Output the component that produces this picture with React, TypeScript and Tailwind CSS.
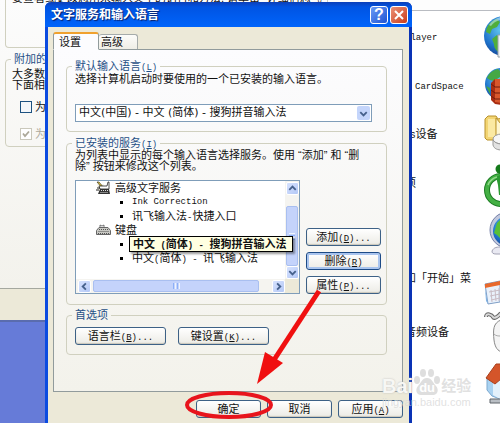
import React from "react";

const FONT = "font-['Liberation_Sans','Noto_Sans_CJK_SC',sans-serif]";

interface MonoProps {
	children: React.ReactNode;
}

// Half-width latin text next to the chinese glyphs
const Mono: React.FC<MonoProps> = ({ children }) => (
	<span className="font-['Liberation_Mono',monospace] text-[9px] leading-none whitespace-pre">
		{children}
	</span>
);

interface AccelProps {
	text: string;
	accel: string;
	dots?: boolean;
}

const Accel: React.FC<AccelProps> = ({ text, accel, dots }) => (
	<>
		{text}
		<Mono>
			(<u>{accel}</u>){dots ? "..." : ""}
		</Mono>
	</>
);

interface XpButtonProps {
	children: React.ReactNode;
	className?: string;
	focused?: boolean;
}

const XpButton: React.FC<XpButtonProps> = ({
	children,
	className = "",
	focused,
}) => (
	<button
		type="button"
		className={`flex h-[18px] items-center justify-center rounded-[3px] border bg-linear-to-b from-white to-[#ecebe5] whitespace-nowrap ${
			focused
				? "border-[#1c4a86] shadow-[inset_0_0_0_2px_#a9c4ee]"
				: "border-[#3d6186] shadow-[inset_0_-1px_1px_#c9c6ba]"
		} ${className}`}
	>
		<span className="leading-4">{children}</span>
	</button>
);

interface GroupProps {
	title: React.ReactNode;
	className?: string;
	children: React.ReactNode;
}

const Group: React.FC<GroupProps> = ({ title, className = "", children }) => (
	<fieldset
		className={`min-w-0 rounded-[4px] border border-[#d0d0bf] px-2 ${className}`}
	>
		<legend className="-ml-[3px] h-3 px-[3px] leading-3 text-[#1f4f86]">
			{title}
		</legend>
		{children}
	</fieldset>
);

const arrows = {
	up: "M2.5 7.5 6 4l3.5 3.5",
	down: "M2.5 4.5 6 8l3.5-3.5",
	left: "M7.5 2.5 4 6l3.5 3.5",
	right: "M4.5 2.5 8 6 4.5 9.5",
};

const ScrollButton: React.FC<{ dir: keyof typeof arrows }> = ({ dir }) => (
	<button
		type="button"
		aria-label={dir}
		className="flex size-[13px] shrink-0 items-center justify-center rounded-[2px] border border-white bg-linear-to-br from-[#d6e2fe] to-[#b4c8f6]"
	>
		<svg viewBox="0 0 12 12" className="size-[11px]">
			<path d={arrows[dir]} fill="none" stroke="#46618c" strokeWidth="2" />
		</svg>
	</button>
);

const HandwritingIcon = () => (
	<svg viewBox="0 0 15 14" className="h-[14px] w-[15px] shrink-0">
		<path d="M1 3h7v8H3z" fill="#f7f5e8" />
		<path d="M1 1l2 0 5 6-1 1z" fill="#e8c93a" stroke="#222" strokeWidth=".6" />
		<path d="M3 5h8l1-4h1v7H4z" fill="#fff" stroke="#222" strokeWidth=".8" />
		<path d="M4 8h9l1 5H2z" fill="#333" />
		<path d="M5 9.5h7M4.5 11.5h8" stroke="#ddd" strokeDasharray="1 1" />
		<path d="M1 7h3M0 9h3" stroke="#222" />
	</svg>
);

const KeyboardIcon = () => (
	<svg viewBox="0 0 15 14" className="h-[14px] w-[15px] shrink-0">
		<path d="M4 4V2l2 1 2-1v2" fill="none" stroke="#555" strokeWidth=".8" />
		<path d="M3 4.5h9l2.5 3v4h-14v-4z" fill="#c9c9c4" stroke="#666" />
		<path
			d="M3 6.5h9M2.5 8.5h10.5M2 10.5h11"
			stroke="#555"
			strokeDasharray="1 1"
		/>
	</svg>
);

const Bullet = () => (
	<i className="mr-[9px] ml-[44px] size-[3px] shrink-0 bg-black" />
);

const ServiceList = () => (
	<div className="flex h-[114px] flex-1 flex-col border border-[#7f9db9] bg-white">
		<div className="flex min-h-0 flex-1">
			<ul className="flex-1 whitespace-nowrap [&>li]:flex [&>li]:h-[14px] [&>li]:items-center">
				<li className="gap-1 pl-5">
					<HandwritingIcon />
					高级文字服务
				</li>
				<li>
					<Bullet />
					<Mono>Ink Correction</Mono>
				</li>
				<li>
					<Bullet />
					<span>
						讯飞输入法<Mono>-</Mono>快捷入口
					</span>
				</li>
				<li className="gap-1 pl-5">
					<KeyboardIcon />
					键盘
				</li>
				<li className="relative">
					<Bullet />
					<span
						role="tooltip"
						className="absolute left-[53px] z-10 h-[16px] border border-black bg-[#ffffe1] pr-[6px] pl-[3px] leading-[14px] font-bold shadow-[2px_2px_2px_#00000066]"
					>
						中文<Mono> (</Mono>简体<Mono>) - </Mono>搜狗拼音输入法
					</span>
				</li>
				<li>
					<Bullet />
					<span>
						中文<Mono>(</Mono>简体<Mono>) - </Mono>讯飞输入法
					</span>
				</li>
			</ul>
			<div className="flex w-[14px] flex-col items-center bg-[#f5f4f0] pt-px">
				<ScrollButton dir="up" />
				<div className="mt-[11px] flex w-[12px] flex-1 flex-col items-center justify-center gap-px rounded-[2px] border border-[#a9bff0] bg-[#c4d3fb]">
					<i className="h-px w-[6px] bg-[#eef4fe]" />
					<i className="h-px w-[6px] bg-[#8cb0f8]" />
					<i className="h-px w-[6px] bg-[#eef4fe]" />
					<i className="h-px w-[6px] bg-[#8cb0f8]" />
				</div>
				<ScrollButton dir="down" />
			</div>
		</div>
		<div className="flex h-[14px] items-center bg-[#ece9d8]">
			<div className="flex h-full flex-1 items-center bg-[#f5f4f0] pl-[2px]">
				<ScrollButton dir="left" />
				<div className="mr-[13px] ml-[2px] flex h-[12px] flex-1 items-center justify-center gap-px rounded-[2px] border border-[#a9bff0] bg-[#c4d3fb]">
					<i className="h-[6px] w-px bg-[#8cb0f8]" />
					<i className="h-[6px] w-px bg-[#eef4fe]" />
					<i className="h-[6px] w-px bg-[#8cb0f8]" />
					<i className="h-[6px] w-px bg-[#eef4fe]" />
				</div>
				<ScrollButton dir="right" />
			</div>
			<div className="w-[14px]" />
		</div>
	</div>
);

const Dialog = () => (
	<section
		role="dialog"
		aria-label="文字服务和输入语言"
		className="absolute top-[2px] left-[45px] w-[367px] rounded-t-[6px] border-x-[3px] border-[#0b4be0] border-r-[#0a33b5] bg-[#ece9d8] pb-6"
	>
		<header className="-mx-[3px] flex h-[25px] items-center rounded-t-[6px] bg-linear-to-b from-[#0a3fb8] via-[#0054e3] via-20% to-[#0064fb] pr-1 pl-[6px]">
			<h1 className="flex-1 text-[12px] font-bold text-white [text-shadow:1px_1px_1px_#0a1f66]">
				文字服务和输入语言
			</h1>
			<button
				type="button"
				aria-label="帮助"
				className="mr-[2px] flex size-[18px] items-center justify-center rounded-[3px] border border-white bg-linear-to-br from-[#6b9bf6] to-[#1f52d2] text-[16px] leading-none font-bold text-white"
			>
				?
			</button>
			<button
				type="button"
				aria-label="关闭"
				className="flex size-[18px] items-center justify-center rounded-[3px] border border-white bg-linear-to-br from-[#ec9076] to-[#c83a14]"
			>
				<svg viewBox="0 0 16 16" className="size-4">
					<path d="M4 4l8 8M12 4l-8 8" stroke="#fff" strokeWidth="2" />
				</svg>
			</button>
		</header>

		<div className="pt-[5px] pr-[6px] pl-[5px]">
			<div role="tablist" className="flex items-end">
				<button
					type="button"
					role="tab"
					aria-selected="true"
					className="relative -mb-px h-[18px] w-[46px] rounded-t-[3px] border border-t-2 border-[#919b9c] border-t-[#f0a12e] border-b-[#fcfcfe] bg-[#fcfcfe] pr-3 leading-3"
				>
					设置
				</button>
				<button
					type="button"
					role="tab"
					aria-selected="false"
					className="h-[15px] w-[39px] rounded-t-[3px] border border-b-0 border-l-0 border-[#a5abaa] bg-linear-to-b from-[#fcfcfa] to-[#efeee6] pr-3 leading-3"
				>
					高级
				</button>
			</div>

			<div className="border border-[#919b9c] bg-linear-to-b from-[#fcfcfe] to-[#f3f2eb] pt-[10px] pr-[15px] pb-9 pl-3">
				<Group title={<Accel text="默认输入语言" accel="L" />} className="pb-[9px]">
					<p className="leading-[14px] whitespace-nowrap">
						选择计算机启动时要使用的一个已安装的输入语言。
					</p>
					<div className="relative mt-[18px] mr-[6px]">
						<select
							aria-label="默认输入语言"
							className="block h-[18px] w-full appearance-none border border-[#7f9db9] bg-white pl-[3px] font-['DejaVu_Sans','Noto_Sans_CJK_SC',sans-serif] leading-4"
						>
							<option>中文(中国) - 中文 (简体) - 搜狗拼音输入法</option>
						</select>
						<span className="pointer-events-none absolute top-[2px] right-[2px] flex h-[14px] w-[13px] items-center justify-center rounded-[2px] bg-[#c4d5fb]">
							<svg viewBox="0 0 12 12" className="size-[11px]">
								<path
									d={arrows.down}
									fill="none"
									stroke="#46618c"
									strokeWidth="2"
								/>
							</svg>
						</span>
					</div>
				</Group>

				<Group
					title={<Accel text="已安装的服务" accel="I" />}
					className="mt-[5px] pb-[10px]"
				>
					<p className="pt-px leading-[11px] whitespace-nowrap">
						为列表中显示的每个输入语言选择服务。使用 “添加” 和 “删
						<br />
						除” 按钮来修改这个列表。
					</p>
					<div className="mt-2 -mr-[3px] flex items-end gap-[6px]">
						<ServiceList />
						<div className="flex w-[75px] flex-col gap-[6px]">
							<XpButton>
								<Accel text="添加" accel="D" dots />
							</XpButton>
							<XpButton focused>
								<Accel text="删除" accel="R" />
							</XpButton>
							<XpButton>
								<Accel text="属性" accel="P" dots />
							</XpButton>
						</div>
					</div>
				</Group>

				<Group title="首选项" className="mt-1 pt-[6px] pb-[9px]">
					<div className="flex gap-3">
						<XpButton className="w-[91px]">
							<Accel text="语言栏" accel="B" dots />
						</XpButton>
						<XpButton className="w-[91px]">
							<Accel text="键设置" accel="K" dots />
						</XpButton>
					</div>
				</Group>
			</div>

			<div className="mt-2 flex justify-end gap-[6px]">
				<XpButton className="w-[65px]">确定</XpButton>
				<XpButton className="w-[65px]">取消</XpButton>
				<XpButton className="w-[65px]">
					<Accel text="应用" accel="A" />
				</XpButton>
			</div>
		</div>
	</section>
);

// Regional options window, mostly hidden by the dialog
const RegionalWindow = () => (
	<div className="w-[405px] shrink-0">
		<div className="flex h-[289px] flex-col border-b border-[#a5a89f] bg-linear-to-b from-[#fcfcfc] to-[#f3f2ec] pl-[5px]">
			<div className="h-[48px] w-[323px] shrink-0 rounded-b-[4px] border border-t-0 border-[#d0d0bf]">
				<p className="-mt-[8px] pl-[6px] leading-3 whitespace-nowrap">
					要查看或更改您用来输入文字的语言和方法, 请单击 “详细信息” 。
				</p>
			</div>
			<Group title="附加的" className="mt-[5px] w-[323px] pb-[5px]">
				<p className="-ml-[2px] pt-[4px] leading-[11px]">
					大多数
					<br />
					下面相
				</p>
				<label className="mt-[9px] flex h-[14px] items-center gap-[3px] pl-[6px]">
					<input
						type="checkbox"
						className="size-[12px] appearance-none border border-[#1d5281] bg-[#f4f7fa]"
					/>
					为复
				</label>
				<label className="mt-[13px] flex h-[14px] items-center gap-[3px] pl-[6px] text-[#aca899]">
					<span className="grid size-[12px] *:col-start-1 *:row-start-1">
						<input
							type="checkbox"
							disabled
							defaultChecked
							className="size-[12px] appearance-none border border-[#cac8bb] bg-white"
						/>
						<svg viewBox="0 0 12 12" className="size-[12px]">
							<path
								d="M3 5.5 5 8l4-4.5"
								fill="none"
								stroke="#aca899"
								strokeWidth="1.8"
							/>
						</svg>
					</span>
					为东
				</label>
			</Group>
		</div>
		<div className="h-[33px] border-b-2 border-[#5a6cae] bg-[#ece9d8]" />
	</div>
);

const rows = [
	{
		label: <Mono>Player</Mono>,
		pad: "",
		icon: (
			<>
				<circle cx="20" cy="24" r="20" fill="url(#globe)" />
				<path
					d="M2 20c1-7 5-11 11-13l3 3-3 5-5 2-2 5zM8 27l5-4 3 3v15c-5-3-6-6-6-9z"
					fill="#4fae3c"
				/>
				<path d="M5 13c3-4 6-6 11-8v3c-4 1-7 3-9 6z" fill="#bfe6f2" opacity=".6" />
				<path d="M14 23h4v22h-4z" fill="#eef0f2" stroke="#9aa3aa" />
			</>
		),
	},
	{
		label: <Mono>CardSpace</Mono>,
		pad: "pl-[10px]",
		icon: (
			<>
				<circle cx="17" cy="23" r="16" fill="url(#globe)" />
				<path d="M3 17c2-5 6-8 11-9l2 2v6l-6 4-4-1zM2 25l4 2v6z" fill="#45a845" />
				<path d="M7 22l4-4h7v26l-7-1-4-4z" fill="#a92d12" />
				<path d="M11 18h6v24l-6-1z" fill="#d8572c" />
				<path d="M7 29l4 3h6M7 35l4 3h6M7 23l4 3h6" stroke="#6f1b0b" fill="none" />
			</>
		),
	},
	{
		label: (
			<>
				<Mono>S</Mono>设备
			</>
		),
		pad: "pl-[5px]",
		icon: (
			<>
				<path
					d="M1 9l3-3h8l2 3 4-1v22H3l-2-2z"
					fill="#f3d573"
					stroke="#b8912c"
				/>
				<path d="M4 9h7l1 18H4z" fill="#fbe9a2" />
				<path d="M12 8l5 6v10l-5 4z" fill="#fff6cf" stroke="#b8912c" />
				<ellipse cx="18" cy="29" rx="9" ry="5" fill="#f6f6f6" stroke="#999" />
				<path d="M9 30v5c1 4 5 5 9 5v-6c-4 0-7-1-9-4z" fill="#e2e2e2" stroke="#999" />
			</>
		),
	},
	{
		label: "项",
		pad: "",
		icon: (
			<>
				<circle cx="17" cy="31" r="14" fill="none" stroke="#1d7d24" strokeWidth="6" />
				<circle cx="17" cy="31" r="14" fill="none" stroke="#44b044" strokeWidth="4" />
				<circle cx="16" cy="10" r="4.5" fill="#157a1b" />
				<path d="M12 18l6-3v21h-3l-1-10z" fill="#2c9a32" />
				<path d="M4 26c2-5 5-7 9-8" stroke="#94da8c" fill="none" strokeWidth="1.5" />
			</>
		),
	},
	{
		label: "",
		pad: "",
		icon: (
			<>
				<path d="M8 43c2-4 5-4 10-4v7H12c-3 0-4-1-4-3z" fill="#e9e9f2" stroke="#a2a2b4" />
				<circle cx="24" cy="22" r="18" fill="#c2c9de" stroke="#7480a8" />
				<circle cx="24" cy="23" r="15" fill="url(#globe)" />
				<path d="M13 15l3-3v18l-3-3-3-2z" fill="#59bf35" />
			</>
		),
	},
	{
		label: "和「开始」菜",
		pad: "pb-[6px]",
		icon: (
			<>
				<path d="M1 27l15-3v21L4 47z" fill="#e9f1fb" stroke="#7f9ec6" />
				<path d="M1 27l15-3v4L1 31z" fill="#e8692c" />
				<path d="M1 31l3 16-2-3z" fill="#7fb1e2" />
				<path
					d="M5 35l11-2M6 39l10-2M7 43l9-2M7 33l1 12M11 32l1 12M15 31v13"
					stroke="#c9bcc4"
					fill="none"
				/>
			</>
		),
	},
	{
		label: "音频设备",
		pad: "pt-1",
		icon: (
			<>
				<path
					d="M2 11c0-5 6-2 7 0s5 0 8-4"
					fill="none"
					stroke="#666"
					strokeWidth="4"
				/>
				<path
					d="M2 11c0-5 6-2 7 0s5 0 8-4"
					fill="none"
					stroke="#d9d9d9"
					strokeWidth="2"
				/>
				<path d="M17 14c-8 3-8 10-7 20 1 8 4 11 8 12z" fill="#f4f4f4" stroke="#888" />
				<path d="M10 28c2 2 4 2 7 2" stroke="#aaa" fill="none" />
			</>
		),
	},
	{
		label: "",
		pad: "",
		icon: (
			<>
				<path d="M3 23l13-9v30l-8-3-5-6z" fill="#a9d2f1" stroke="#7da9d0" />
				<path d="M9 27l7-5v22l-7-4z" fill="#e3f1fc" />
				<path d="M2 23L12 9h5v15l-6 5z" fill="#d4552a" stroke="#a8401d" />
				<path d="M6 44h11v4H6z" fill="#b9bec4" stroke="#5f656b" />
			</>
		),
	},
];

const ComponentList = () => (
	<div className="min-w-0 flex-1 bg-white">
		<div className="h-[11px] border-b border-[#b9bcc2] bg-[#fdfdfd]" />
		<ul className="pt-px">
			{rows.map((row, i) => (
				<li key={i} className="flex h-[49px] items-center justify-between">
					<span className={`whitespace-nowrap ${row.pad}`}>{row.label}</span>
					<svg viewBox="0 0 16 49" className="h-[49px] w-4 shrink-0">
						<defs>
							<radialGradient id="globe" cx=".4" cy=".35" r=".7">
								<stop offset="0" stopColor="#5fc4ee" />
								<stop offset=".6" stopColor="#1f74cc" />
								<stop offset="1" stopColor="#123f8e" />
							</radialGradient>
						</defs>
						{row.icon}
					</svg>
				</li>
			))}
		</ul>
	</div>
);

const Watermark = () => (
	<div className="absolute top-[368px] left-[382px] font-bold text-[#d9d9d9]/80">
		<div className="flex items-end leading-5">
			<span className="text-[20px] text-[#f7f7f4] [text-shadow:0_0_2px_#bbb]">
				Bai
			</span>
			<span className="relative flex h-[28px] w-[28px] items-end justify-center text-[13px] leading-4 text-white">
				<svg viewBox="0 0 28 28" className="absolute inset-0 size-7" fill="#dedede">
					<ellipse cx="4" cy="12" rx="3" ry="4" />
					<ellipse cx="10" cy="5" rx="3" ry="4" />
					<ellipse cx="18" cy="5" rx="3" ry="4" />
					<ellipse cx="24" cy="12" rx="3" ry="4" />
					<path d="M14 10c5 0 6 5 9 8s2 9-3 9H8c-5 0-6-6-3-9s4-8 9-8z" />
				</svg>
				<span className="relative">du</span>
			</span>
			<span className="text-[15px]">经验</span>
		</div>
		<div className="text-[11px] leading-3 font-normal">jingyan.baidu.com</div>
	</div>
);

const App = () => (
	<main
		className={`relative flex h-screen overflow-hidden bg-[#667bd8] text-[11px] text-[#111] ${FONT}`}
	>
		<RegionalWindow />
		<ComponentList />
		<Dialog />
		<Watermark />
		<svg
			viewBox="0 0 150 140"
			className="pointer-events-none absolute top-[283px] left-[180px] h-[140px] w-[150px]"
		>
			<path d="M139 8L92 80" stroke="#f01010" strokeWidth="5" />
			<path d="M77 101l8-32 18 11z" fill="#f01010" />
			<ellipse
				cx="49"
				cy="122"
				rx="42"
				ry="12"
				fill="none"
				stroke="#e8141c"
				strokeWidth="4"
			/>
		</svg>
	</main>
);

export default App;
